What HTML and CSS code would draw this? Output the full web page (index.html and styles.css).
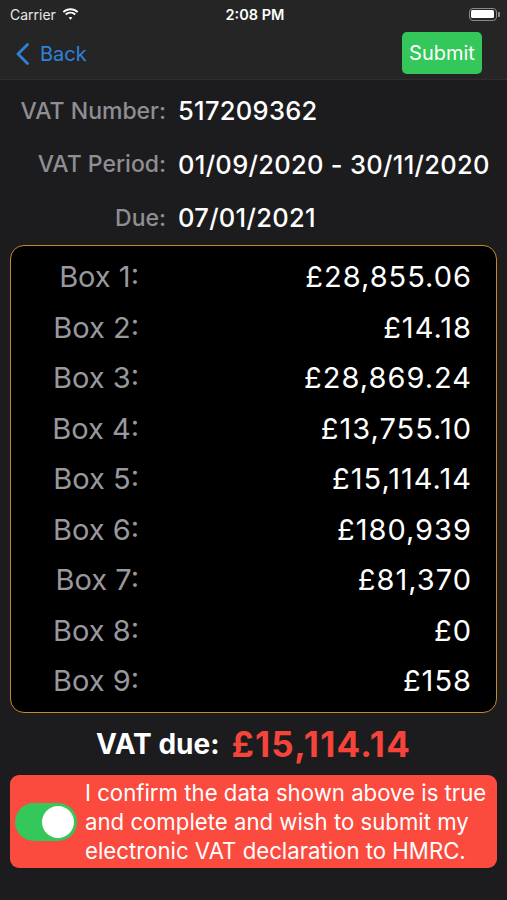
FILE: index.html
```html
<!DOCTYPE html>
<html lang="en">
<head>
    <meta charset="UTF-8">
    <title>VAT Return</title>
    <link rel="stylesheet" href="styles.css">
</head>
<body>

    <header class="top">
        <div class="status">
            <div class="status-left">
                <span>Carrier</span>
                <svg class="wifi" width="17" height="12" viewBox="0 0 17 12">
                    <path d="M8.5 2.2c2.5 0 4.8 1 6.5 2.6l1.3-1.4C14.2 1.4 11.5 0.2 8.5 0.2S2.8 1.4 0.7 3.4L2 4.8c1.7-1.6 4-2.6 6.5-2.6z" fill="#fff"/>
                    <path d="M8.5 5.6c1.6 0 3 .6 4.1 1.6l1.3-1.4C12.5 4.5 10.6 3.7 8.5 3.7S4.5 4.5 3.1 5.8l1.3 1.4c1.1-1 2.5-1.6 4.1-1.6z" fill="#fff"/>
                    <path d="M8.5 8.9c.8 0 1.4.3 1.9.7L8.5 11.7 6.6 9.6c.5-.4 1.1-.7 1.9-.7z" fill="#fff"/>
                </svg>
            </div>
            <div class="status-time">2:08 PM</div>
            <div class="status-right">
                <div class="battery"><div class="battery-fill"></div></div>
                <div class="battery-cap"></div>
            </div>
        </div>
        <nav class="navbar">
            <a class="back">
                <svg width="15" height="22" viewBox="0 0 15 22">
                    <path d="M12.5 1.5 3 11l9.5 9.5" fill="none" stroke="#2f82dc" stroke-width="2.8" stroke-linecap="round" stroke-linejoin="round"/>
                </svg>
                <span>Back</span>
            </a>
            <button class="submit">Submit</button>
        </nav>
    </header>

    <main class="content">
        <div class="info">
            <div class="info-row"><span class="info-label">VAT Number:</span><span class="info-value">517209362</span></div>
            <div class="info-row"><span class="info-label">VAT Period:</span><span class="info-value">01/09/2020 - 30/11/2020</span></div>
            <div class="info-row"><span class="info-label">Due:</span><span class="info-value">07/01/2021</span></div>
        </div>

        <div class="boxes">
            <div class="box-row"><span class="box-label">Box 1:</span><span class="box-value">£28,855.06</span></div>
            <div class="box-row"><span class="box-label">Box 2:</span><span class="box-value">£14.18</span></div>
            <div class="box-row"><span class="box-label">Box 3:</span><span class="box-value">£28,869.24</span></div>
            <div class="box-row"><span class="box-label">Box 4:</span><span class="box-value">£13,755.10</span></div>
            <div class="box-row"><span class="box-label">Box 5:</span><span class="box-value">£15,114.14</span></div>
            <div class="box-row"><span class="box-label">Box 6:</span><span class="box-value">£180,939</span></div>
            <div class="box-row"><span class="box-label">Box 7:</span><span class="box-value">£81,370</span></div>
            <div class="box-row"><span class="box-label">Box 8:</span><span class="box-value">£0</span></div>
            <div class="box-row"><span class="box-label">Box 9:</span><span class="box-value">£158</span></div>
        </div>

        <div class="due">
            <span class="due-label">VAT due:</span>
            <span class="due-amount">£15,114.14</span>
        </div>

        <div class="confirm">
            <div class="toggle"><div class="knob"></div></div>
            <p class="confirm-text">I confirm the data shown above is true and complete and wish to submit my electronic VAT declaration to HMRC.</p>
        </div>
    </main>

</body>
</html>
```

FILE: styles.css
```css
* {
    box-sizing: border-box;
}

body {
    margin: 0;
    background-color: #1c1c1e;
    font-family: Inter, "Liberation Sans", sans-serif;
    color: #fff;
    width: 507px;
    height: 900px;
    overflow: hidden;
}

.top {
    background-color: #252526;
    border-bottom: 1px solid #2e2e30;
}

.status {
    height: 28px;
    display: flex;
    align-items: center;
    justify-content: space-between;
    padding: 0 7px 0 10px;
    font-size: 14px;
}

.status-left {
    display: flex;
    align-items: center;
    gap: 6px;
    width: 120px;
    color: #e8e8e8;
}

.status-time {
    font-weight: 600;
    font-size: 14.5px;
}

.status-right {
    width: 120px;
    display: flex;
    justify-content: flex-end;
    align-items: center;
}

.battery {
    width: 28px;
    height: 13px;
    border: 1.5px solid #8a8a8c;
    border-radius: 4px;
    padding: 1.5px;
}

.battery-fill {
    width: 100%;
    height: 100%;
    background: #fff;
    border-radius: 1.5px;
}

.battery-cap {
    width: 2px;
    height: 5px;
    background: #8a8a8c;
    border-radius: 0 1px 1px 0;
    margin-left: 1px;
}

.navbar {
    height: 51px;
    display: flex;
    align-items: center;
    justify-content: space-between;
    padding: 0 25px 0 15px;
}

.back {
    display: flex;
    align-items: center;
    gap: 10px;
    color: #2f82dc;
    font-size: 20px;
}

.submit {
    background-color: #34c759;
    color: #fff;
    border: none;
    border-radius: 5px;
    font-family: inherit;
    font-size: 20px;
    width: 80px;
    height: 42px;
    padding: 0;
    margin-top: -2px;
}

.content {
    padding: 0 10px;
}

.info {
    padding: 4px 0 0;
}

.info-row {
    display: grid;
    grid-template-columns: 156px 1fr;
    column-gap: 12px;
    align-items: center;
    height: 53.5px;
}

.info-label {
    text-align: right;
    color: #8e8e93;
    font-size: 23px;
    font-weight: 500;
    white-space: nowrap;
}

.info-value {
    font-size: 25.5px;
    font-weight: 500;
    letter-spacing: 0.3px;
    white-space: nowrap;
}

.boxes {
    background: #000;
    border: 1.5px solid #c7882a;
    border-radius: 14px;
    padding: 6px 25px 6px 0;
}

.box-row {
    display: grid;
    grid-template-columns: 128px 1fr;
    align-items: center;
    height: 50.5px;
    font-size: 29px;
}

.box-label {
    text-align: right;
    color: #98989d;
}

.box-value {
    text-align: right;
    letter-spacing: 1px;
    margin-right: -1px;
}

.due {
    display: flex;
    justify-content: center;
    align-items: center;
    gap: 12px;
    height: 62px;
    font-weight: 700;
}

.due-label {
    font-size: 28px;
}

.due-amount {
    color: #f5443a;
    font-size: 35px;
    letter-spacing: 1.2px;
}

.confirm {
    background-color: #fb4a3e;
    border-radius: 9px;
    display: flex;
    align-items: center;
    gap: 8px;
    padding: 6px 6px 6px 5px;
    height: 93px;
}

.toggle {
    flex: none;
    width: 62px;
    height: 38px;
    border-radius: 19px;
    background: #34c759;
    display: flex;
    justify-content: flex-end;
    align-items: center;
    padding-right: 3px;
}

.knob {
    width: 32px;
    height: 32px;
    border-radius: 50%;
    background: #fff;
}

.confirm-text {
    margin: 0;
    font-size: 22.2px;
    line-height: 29px;
}
```
